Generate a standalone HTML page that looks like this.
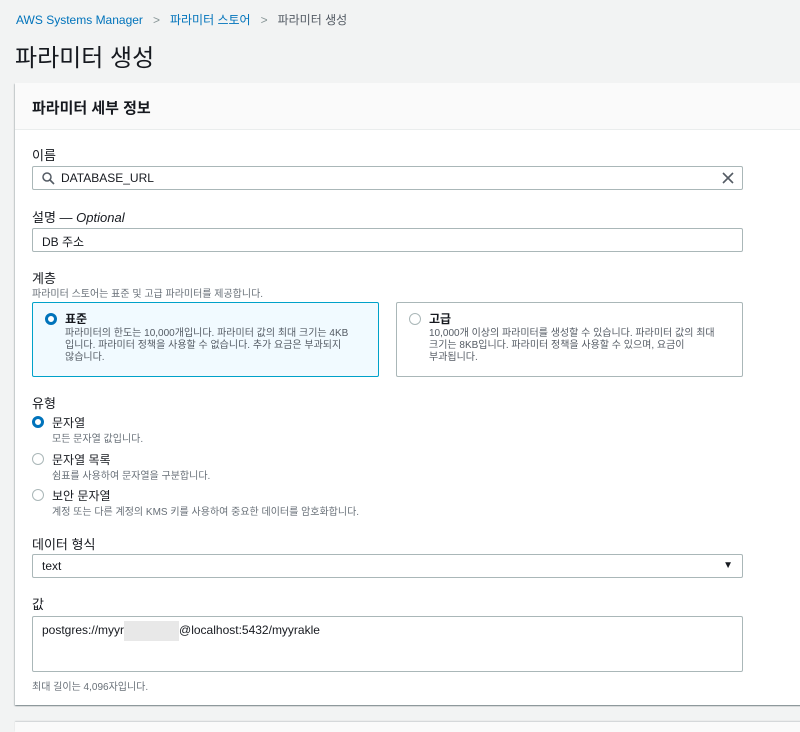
<!DOCTYPE html>
<html><head><meta charset="utf-8"><style>
*{box-sizing:border-box;margin:0;padding:0}
body{width:800px;height:728px;overflow:hidden;background:#f2f3f3;font-family:"Liberation Sans","Noto Sans CJK KR",sans-serif;color:#16191f;position:relative}
.a{position:absolute;white-space:nowrap}
.bc{top:11px;left:16px;font-size:12px;color:#545b64}
.bc .l{color:#0073bb}
.bc .s{color:#879596;margin:0 10px}
h1{position:absolute;top:38px;left:15px;font-size:24px;font-weight:400;color:#16191f}
.card{position:absolute;left:15px;top:83px;width:800px;height:622px;background:#fff;box-shadow:0 1px 1px rgba(0,28,36,.3),1px 1px 1px rgba(0,28,36,.15),-1px 1px 1px rgba(0,28,36,.15)}
.hd{position:absolute;left:0;top:0;width:100%;height:47px;background:#fafafa;border-bottom:1px solid #eaeded}
.hd span{position:absolute;left:17px;top:14px;font-size:15px;font-weight:700}
.lb{font-size:13px;color:#16191f}
.inp{position:absolute;left:32px;width:711px;height:24px;border:1px solid #aab7b8;border-radius:2px;background:#fff;font-size:12px;padding:4px 9px}
.sm{font-size:10px;color:#687078}
.tile{position:absolute;top:302px;height:75px;border:1px solid #aab7b8;border-radius:2px;padding:7px 16px 0 32px}
.tile.on{background:#f1faff;border-color:#00a1c9}
.tile b{font-size:12px;display:block;margin-bottom:1px}
.tile p{font-size:10px;color:#545b64;line-height:12px;white-space:normal;word-break:keep-all}
.r{position:absolute;width:12px;height:12px;border-radius:50%;border:1px solid #aab7b8;background:#fff}
.r.on{border:3.5px solid #0073bb}
</style></head><body>
<div class="a bc"><span class="l">AWS Systems Manager</span><span class="s">&gt;</span><span class="l">파라미터 스토어</span><span class="s">&gt;</span>파라미터 생성</div>
<h1>파라미터 생성</h1>
<div class="card"><div class="hd"><span>파라미터 세부 정보</span></div></div>
<div class="a lb" style="left:32px;top:145px">이름</div>
<div class="inp" style="top:166px;padding-left:28px">DATABASE_URL
<svg style="position:absolute;left:9px;top:5px" width="13" height="13" viewBox="0 0 13 13"><circle cx="5" cy="5" r="4" fill="none" stroke="#545b64" stroke-width="1.5"/><path d="M8 8l4 4" stroke="#545b64" stroke-width="1.6"/></svg>
<svg style="position:absolute;right:8px;top:5px" width="12" height="12" viewBox="0 0 12 12"><path d="M1 1l10 10M11 1L1 11" stroke="#545b64" stroke-width="1.6"/></svg></div>
<div class="a lb" style="left:32px;top:207px">설명 — <i>Optional</i></div>
<div class="inp" style="top:228px">DB 주소</div>
<div class="a lb" style="left:32px;top:268px">계층</div>
<div class="a sm" style="left:32px;top:285px">파라미터 스토어는 표준 및 고급 파라미터를 제공합니다.</div>
<div class="tile on" style="left:32px;width:347px"><span class="r on" style="left:12px;top:10px"></span><b>표준</b><p>파라미터의 한도는 10,000개입니다. 파라미터 값의 최대 크기는 4KB 입니다. 파라미터 정책을 사용할 수 없습니다. 추가 요금은 부과되지 않습니다.</p></div>
<div class="tile" style="left:396px;width:347px"><span class="r" style="left:12px;top:10px"></span><b>고급</b><p>10,000개 이상의 파라미터를 생성할 수 있습니다. 파라미터 값의 최대 크기는 8KB입니다. 파라미터 정책을 사용할 수 있으며, 요금이 부과됩니다.</p></div>
<div class="a lb" style="left:32px;top:393px">유형</div>
<span class="r on" style="left:32px;top:416px"></span><div class="a" style="left:52px;top:414px;font-size:12px">문자열</div><div class="a sm" style="left:52px;top:430px">모든 문자열 값입니다.</div>
<span class="r" style="left:32px;top:453px"></span><div class="a" style="left:52px;top:451px;font-size:12px">문자열 목록</div><div class="a sm" style="left:52px;top:467px">쉼표를 사용하여 문자열을 구분합니다.</div>
<span class="r" style="left:32px;top:489px"></span><div class="a" style="left:52px;top:487px;font-size:12px">보안 문자열</div><div class="a sm" style="left:52px;top:503px">계정 또는 다른 계정의 KMS 키를 사용하여 중요한 데이터를 암호화합니다.</div>
<div class="a lb" style="left:32px;top:534px">데이터 형식</div>
<div class="inp" style="top:554px">text<span style="position:absolute;right:9px;top:5px;font-size:10px;color:#16191f">▼</span></div>
<div class="a lb" style="left:32px;top:594px">값</div>
<div class="inp" style="top:616px;height:56px;padding-top:6px">postgres://myyr<span style="display:inline-block;width:55px;height:20px;background:#e8e8e8;vertical-align:middle;margin:-6px 0"></span>@localhost:5432/myyrakle</div>
<div class="a sm" style="left:32px;top:678px">최대 길이는 4,096자입니다.</div>
<div style="position:absolute;left:15px;top:722px;width:800px;height:10px;background:#fafafa;box-shadow:0 -1px 1px rgba(0,28,36,.15)"></div>
</body></html>
